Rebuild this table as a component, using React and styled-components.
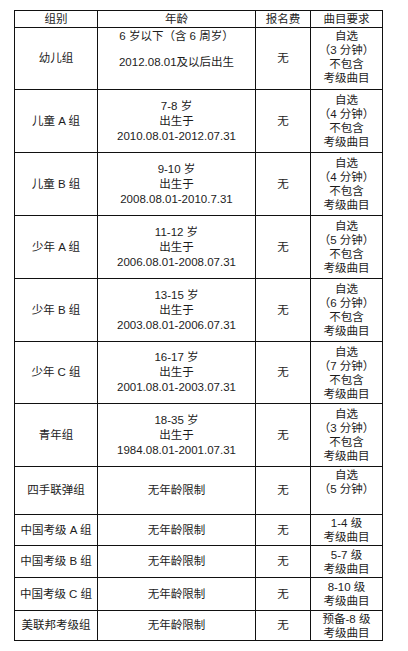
import React from 'react';
import styled, { createGlobalStyle } from 'styled-components';

const GlobalStyle = createGlobalStyle`
  html, body {
    margin: 0;
    padding: 0;
    background: #fff;
  }
  body {
    font-family: "Liberation Sans", "Noto Sans CJK SC", sans-serif;
  }
`;

const Page = styled.div`
  width: 408px;
  height: 651px;
  padding: 10px 0 0 14px;
  box-sizing: border-box;
  background: #fff;
`;

const Table = styled.table`
  border-collapse: collapse;
  table-layout: fixed;
  width: 368px;
  color: #1c1c1c;
  font-size: 11.5px;
  line-height: 15px;
  text-align: center;
`;

const Row = styled.tr`
  height: ${(p) => p.$h}px;
`;

const HeadCell = styled.th`
  border: 1px solid #111;
  padding: 0;
  font-weight: normal;
  line-height: 14px;
  vertical-align: middle;
`;

const Cell = styled.td`
  border: 1px solid #111;
  padding: ${(p) => (p.$top ? '1px 0 0' : '0')};
  vertical-align: ${(p) => (p.$top ? 'top' : 'middle')};
  line-height: ${(p) => (p.$tight ? '14px' : '15px')};
  white-space: nowrap;
  overflow: hidden;
`;

const Line = styled.div`
  margin-bottom: ${(p) => p.$gap || 0}px;
`;

const Lines = ({ items }) => items.map((t, i) => <Line key={i}>{t}</Line>);

const ageCell = (a, from, to) => [`${a} 岁`, '出生于', `${from}-${to}`];
const pieceCell = (m) => ['自选', `（${m} 分钟）`, '不包含', '考级曲目'];

const rows = [
  { h: 63, group: '儿童 A 组', age: ageCell('7-8', '2010.08.01', '2012.07.31'), piece: pieceCell(4) },
  { h: 63, group: '儿童 B 组', age: ageCell('9-10', '2008.08.01', '2010.7.31'), piece: pieceCell(4) },
  { h: 63, group: '少年 A 组', age: ageCell('11-12', '2006.08.01', '2008.07.31'), piece: pieceCell(5) },
  { h: 63, group: '少年 B 组', age: ageCell('13-15', '2003.08.01', '2006.07.31'), piece: pieceCell(6) },
  { h: 62, group: '少年 C 组', age: ageCell('16-17', '2001.08.01', '2003.07.31'), piece: pieceCell(7) },
  { h: 63, group: '青年组', age: ageCell('18-35', '1984.08.01', '2001.07.31'), piece: pieceCell(3) },
  { h: 48, group: '四手联弹组', age: ['无年龄限制'], piece: ['自选', '（5 分钟）'], top: true },
  { h: 31, group: '中国考级 A 组', age: ['无年龄限制'], piece: ['1-4 级', '考级曲目'] },
  { h: 32, group: '中国考级 B 组', age: ['无年龄限制'], piece: ['5-7 级', '考级曲目'] },
  { h: 33, group: '中国考级 C 组', age: ['无年龄限制'], piece: ['8-10 级', '考级曲目'] },
  { h: 30, group: '美联邦考级组', age: ['无年龄限制'], piece: ['预备-8 级', '考级曲目'] },
];

export default function App() {
  return (
    <>
      <GlobalStyle />
      <Page>
        <Table>
          <colgroup>
            <col style={{ width: 83 }} />
            <col style={{ width: 158 }} />
            <col style={{ width: 55 }} />
            <col style={{ width: 72 }} />
          </colgroup>
          <thead>
            <Row $h={17}>
              <HeadCell>组别</HeadCell>
              <HeadCell>年龄</HeadCell>
              <HeadCell>报名费</HeadCell>
              <HeadCell>曲目要求</HeadCell>
            </Row>
          </thead>
          <tbody>
            <Row $h={62}>
              <Cell>幼儿组</Cell>
              <Cell $top>
                <Line $gap={11}>6 岁以下（含 6 周岁）</Line>
                <Line>2012.08.01及以后出生</Line>
              </Cell>
              <Cell>无</Cell>
              <Cell $top $tight>
                <Lines items={pieceCell(3)} />
              </Cell>
            </Row>
            {rows.map((r) => (
              <Row key={r.group} $h={r.h}>
                <Cell>{r.group}</Cell>
                <Cell $tight={r.age.length > 1 ? false : undefined}>
                  <Lines items={r.age} />
                </Cell>
                <Cell>无</Cell>
                <Cell $top={r.top} $tight>
                  <Lines items={r.piece} />
                </Cell>
              </Row>
            ))}
          </tbody>
        </Table>
      </Page>
    </>
  );
}
